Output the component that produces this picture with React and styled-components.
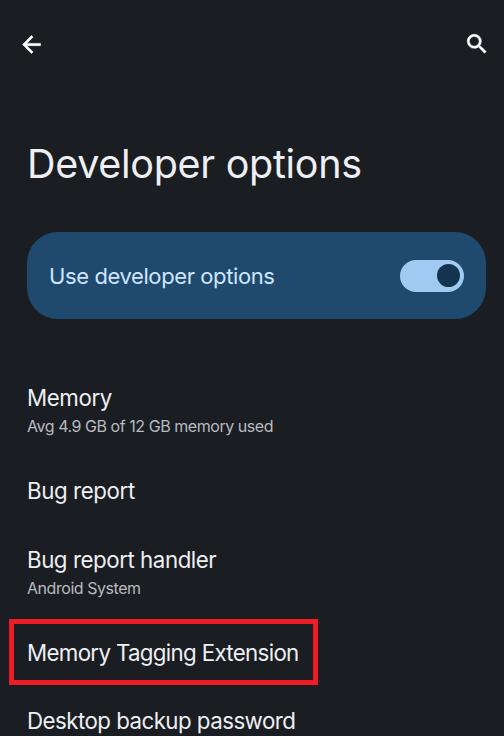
import React from "react";
import styled, { createGlobalStyle } from "styled-components";

const GlobalStyle = createGlobalStyle`
  body { margin: 0; background: #1a1d21; }
  * { box-sizing: border-box; }
`;
const Screen = styled.main`
  width: 504px;
  height: 736px;
  overflow: hidden;
  background: #1a1d21;
  color: #eeeff3;
  font-family: Inter, Roboto, sans-serif;
  display: flex;
  flex-direction: column;
`;
const Toolbar = styled.header`
  height: 88px;
  flex: none;
  padding: 0 14px 0 18px;
  display: flex;
  align-items: center;
  justify-content: space-between;
`;
const IconButton = styled.button`
  width: 27px;
  height: 26px;
  padding: 0;
  border: 0;
  background: none;
  color: #ffffff;
  display: flex;
  align-items: center;
  justify-content: flex-end;
  svg { flex: none; width: ${(p) => p.$size}px; height: ${(p) => p.$size}px; fill: currentColor; stroke: currentColor; stroke-width: 0.5; }
`;
const FitText = styled.span`
  display: block;
  white-space: nowrap;
  width: max-content;
  letter-spacing: ${(p) => p.$spacing || 0}px;
`;
const Title = styled.h1`
  margin: 51px 0 0 27px;
  height: 50px;
  font-size: 39.5px;
  line-height: 50px;
  font-weight: 400;
  flex: none;
`;
const SwitchCard = styled.section`
  flex: none;
  margin: 43px 18px 0 27px;
  height: 87px;
  border-radius: 31px;
  background: #1f4a6d;
  color: #cfe5ff;
  padding: 0 22px;
  display: flex;
  align-items: center;
  justify-content: space-between;
  font-size: 22px;
`;
const Track = styled.span`
  width: 64px;
  height: 32px;
  padding: 4.5px;
  border-radius: 16px;
  background: #a1caf3;
  display: flex;
  justify-content: flex-end;
`;
const Thumb = styled.span`
  width: 23px;
  height: 23px;
  border-radius: 50%;
  background: #12344e;
`;
const List = styled.section`
  margin-top: 54px;
  display: flex;
  flex-direction: column;
  flex: none;
`;
const Row = styled.div`
  height: ${(p) => p.$height}px;
  padding: 10px 0 0 27px;
  ${(p) => p.$marked && "margin: -8px 186px 11px 9px; padding: 14px 0 0 13px; border: 5px solid #ee1c25;"}
`;
const Label = styled.div`
  height: 30px;
  line-height: 30px;
  font-size: 22.3px;
`;
const Detail = styled.div`
  height: 26px;
  line-height: 26px;
  font-size: 16px;
  color: #b9bbc0;
`;
const rows = [
  { label: "Memory", spacing: -0.4, detail: "Avg 4.9 GB of 12 GB memory used", detailSpacing: -0.45, height: 93 },
  { label: "Bug report", spacing: -0.4, height: 69 },
  { label: "Bug report handler", spacing: -0.45, detail: "Android System", detailSpacing: -0.45, height: 92 },
  { label: "Memory Tagging Extension", spacing: -0.67, height: 66, marked: true },
  { label: "Desktop backup password", spacing: -0.54, height: 69 },
];

export default function App() {
  return (
    <>
      <GlobalStyle />
      <Screen>
        <Toolbar>
          <IconButton $size={27} aria-label="Back"><svg viewBox="0 0 24 24"><path d="M20 11H7.83l5.59-5.59L12 4l-8 8 8 8 1.41-1.41L7.83 13H20z" /></svg></IconButton>
          <IconButton $size={26} aria-label="Search"><svg viewBox="0 0 24 24"><path d="M15.5 14h-.79l-.28-.27A6.47 6.47 0 0 0 16 9.5 6.5 6.5 0 1 0 9.5 16c1.61 0 3.09-.59 4.23-1.57l.27.28v.79l5 4.99L20.49 19zm-6 0C7.01 14 5 11.99 5 9.5S7.01 5 9.5 5 14 7.01 14 9.5 11.99 14 9.5 14" /></svg></IconButton>
        </Toolbar>
        <Title><FitText $spacing={-0.3}>Developer options</FitText></Title>
        <SwitchCard><FitText $spacing={-0.4}>Use developer options</FitText><Track role="switch" aria-checked="true"><Thumb /></Track></SwitchCard>
        <List>
          {rows.map((r) => (
            <Row key={r.label} $height={r.height} $marked={r.marked}>
              <Label><FitText $spacing={r.spacing}>{r.label}</FitText></Label>
              {r.detail && <Detail><FitText $spacing={r.detailSpacing}>{r.detail}</FitText></Detail>}
            </Row>
          ))}
        </List>
      </Screen>
    </>
  );
}
